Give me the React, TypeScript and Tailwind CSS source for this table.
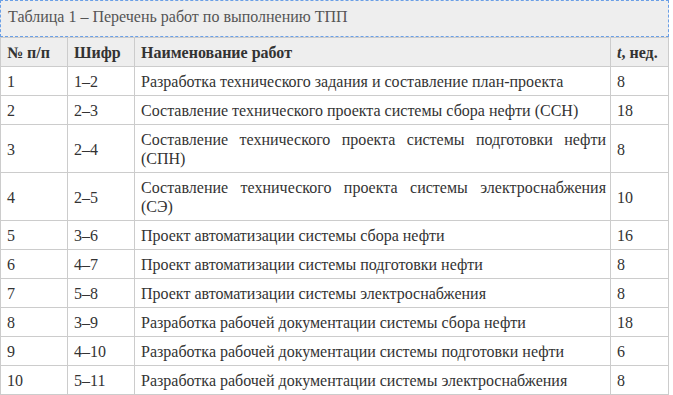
import React from "react";

const rows: [string, string, string, string][] = [
  ["1", "1–2", "Разработка технического задания и составление план-проекта", "8"],
  ["2", "2–3", "Составление технического проекта системы сбора нефти (ССН)", "18"],
  ["3", "2–4", "Составление технического проекта системы подготовки нефти (СПН)", "8"],
  ["4", "2–5", "Составление технического проекта системы электроснабжения (СЭ)", "10"],
  ["5", "3–6", "Проект автоматизации системы сбора нефти", "16"],
  ["6", "4–7", "Проект автоматизации системы подготовки нефти", "8"],
  ["7", "5–8", "Проект автоматизации системы электроснабжения", "8"],
  ["8", "3–9", "Разработка рабочей документации системы сбора нефти", "18"],
  ["9", "4–10", "Разработка рабочей документации системы подготовки нефти", "6"],
  ["10", "5–11", "Разработка рабочей документации системы электроснабжения", "8"],
];

const cell = "border border-[#cccccc] pl-[6px] pr-[4px] pt-[5px] pb-[4px]";

export default function App() {
  return (
    <div className="w-[673px] h-[395px] bg-white text-[#333333] font-['Liberation_Serif']">
      <div className="w-[669px]">
        <div className="h-[37px] border border-dashed border-[#6a9fe6] bg-[#eeeeee] pl-[7px] pt-[6px] text-[16px] leading-[19px] text-[#555555]">
          Таблица 1 – Перечень работ по выполнению ТПП
        </div>
        <table className="w-[669px] border-collapse text-[16px] leading-[19px] table-fixed font-['Liberation_Serif']">
          <colgroup>
            <col className="w-[67px]" />
            <col className="w-[67px]" />
            <col className="w-[476px]" />
            <col className="w-[58px]" />
          </colgroup>
          <thead>
            <tr className="bg-[#eeeeee]">
              <th className={`${cell} text-left font-bold`}>№ п/п</th>
              <th className={`${cell} text-left font-bold`}>Шифр</th>
              <th className={`${cell} text-left font-bold`}>Наименование работ</th>
              <th className={`${cell} text-left font-bold whitespace-nowrap`}>
                <i>t</i>, нед.
              </th>
            </tr>
          </thead>
          <tbody>
            {rows.map((r) => (
              <tr key={r[0]}>
                <td className={`${cell} align-middle`}>{r[0]}</td>
                <td className={`${cell} align-middle`}>{r[1]}</td>
                <td className={`${cell} align-top text-justify`}>{r[2]}</td>
                <td className={`${cell} align-middle`}>{r[3]}</td>
              </tr>
            ))}
          </tbody>
        </table>
      </div>
    </div>
  );
}
